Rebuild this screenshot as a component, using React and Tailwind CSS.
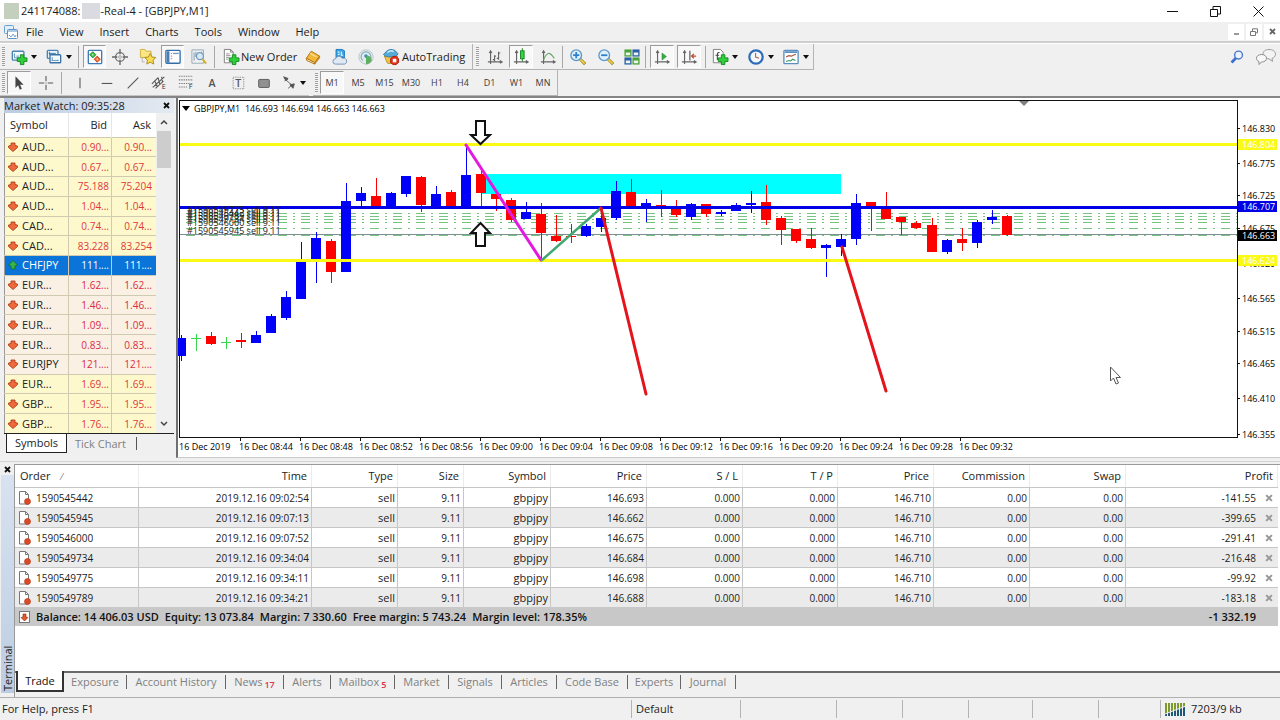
import React from 'react';

const menus = ['File', 'View', 'Insert', 'Charts', 'Tools', 'Window', 'Help'];

const symbols = [
  ['AUD...', '0.90...', '0.90...', 'yellow'],
  ['AUD...', '0.67...', '0.67...', 'yellow'],
  ['AUD...', '75.188', '75.204', 'yellow'],
  ['AUD...', '1.04...', '1.04...', 'yellow'],
  ['CAD...', '0.74...', '0.74...', 'yellow'],
  ['CAD...', '83.228', '83.254', 'yellow'],
  ['CHFJPY', '111....', '111....', 'selected'],
  ['EUR...', '1.62...', '1.62...', 'pink'],
  ['EUR...', '1.46...', '1.46...', 'pink'],
  ['EUR...', '1.09...', '1.09...', 'pink'],
  ['EUR...', '0.83...', '0.83...', 'pink'],
  ['EURJPY', '121....', '121....', 'pink'],
  ['EUR...', '1.69...', '1.69...', 'yellow'],
  ['GBP...', '1.95...', '1.95...', 'yellow'],
  ['GBP...', '1.76...', '1.76...', 'yellow'],
];

const rowTone = {
  yellow: 'bg-[#fdf9cd] text-[#e0383a]',
  pink: 'bg-[#fbf0e4] text-[#d92b45]',
  selected: 'bg-[#0a74d8] text-white',
};

const orders = [
  ['1590545442', '2019.12.16 09:02:54', '146.693', '-141.55'],
  ['1590545945', '2019.12.16 09:07:13', '146.662', '-399.65'],
  ['1590546000', '2019.12.16 09:07:52', '146.675', '-291.41'],
  ['1590549734', '2019.12.16 09:34:04', '146.684', '-216.48'],
  ['1590549775', '2019.12.16 09:34:11', '146.698', '-99.92'],
  ['1590549789', '2019.12.16 09:34:21', '146.688', '-183.18'],
];

const orderColumns = ['Time', 'Type', 'Size', 'Symbol', 'Price', 'S / L', 'T / P', 'Price', 'Commission', 'Swap', 'Profit'];

const terminalTabs = [
  { name: 'Exposure', width: 'w-[63px]' },
  { name: 'Account History', width: 'w-[99px]' },
  { name: 'News', width: 'w-[58px]', count: 17 },
  { name: 'Alerts', width: 'w-[47px]' },
  { name: 'Mailbox', width: 'w-[64px]', count: 5 },
  { name: 'Market', width: 'w-[54px]' },
  { name: 'Signals', width: 'w-[53px]' },
  { name: 'Articles', width: 'w-[55px]' },
  { name: 'Code Base', width: 'w-[71px]' },
  { name: 'Experts', width: 'w-[53px]' },
  { name: 'Journal', width: 'w-[55px]' },
];

const timeframes = [
  ['M5', 'w-[26px]'], ['M15', 'w-[27px]'], ['M30', 'w-[26px]'], ['H1', 'w-[26px]'],
  ['H4', 'w-[26px]'], ['D1', 'w-[27px]'], ['W1', 'w-[27px]'], ['MN', 'w-[26px]'],
];

// [high, body top, body bottom, low, colour]
const candles = [
  [335, 338, 356, 361, 'b'], [334, 338, 339, 351, 'g'], [332, 336, 344, 345, 'r'], [337, 342, 343, 349, 'g'],
  [333, 340, 342, 348, 'r'], [331, 335, 343, 343, 'b'], [314, 316, 333, 333, 'b'], [291, 297, 318, 320, 'b'],
  [242, 262, 299, 299, 'b'], [232, 238, 260, 283, 'b'], [239, 241, 272, 283, 'r'], [183, 201, 272, 272, 'b'],
  [187, 193, 201, 206, 'b'], [178, 196, 206, 208, 'r'], [192, 193, 206, 206, 'b'], [176, 176, 194, 197, 'b'],
  [176, 177, 205, 212, 'r'], [186, 194, 206, 206, 'b'], [190, 192, 206, 206, 'r'], [146, 175, 206, 206, 'b'],
  [171, 174, 193, 206, 'r'], [193, 194, 199, 211, 'r'], [198, 200, 220, 222, 'r'], [202, 212, 219, 219, 'b'],
  [203, 214, 233, 262, 'r'], [215, 236, 241, 242, 'r'], [224, 236, 237, 243, 'r'], [224, 226, 236, 237, 'b'],
  [207, 218, 227, 232, 'b'], [181, 191, 218, 220, 'b'], [179, 192, 206, 206, 'r'], [199, 203, 207, 222, 'b'],
  [190, 205, 209, 217, 'r'], [200, 208, 215, 217, 'r'], [203, 204, 217, 220, 'b'], [204, 204, 214, 217, 'r'],
  [210, 212, 214, 216, 'b'], [203, 205, 211, 211, 'b'], [191, 203, 205, 213, 'b'], [185, 202, 220, 225, 'r'],
  [216, 218, 230, 245, 'r'], [229, 229, 241, 243, 'r'], [228, 239, 248, 249, 'r'], [244, 245, 248, 277, 'b'],
  [234, 239, 247, 256, 'b'], [194, 203, 239, 245, 'b'], [202, 202, 209, 231, 'r'], [192, 208, 219, 219, 'r'],
  [217, 217, 222, 235, 'r'], [221, 223, 228, 229, 'r'], [218, 225, 252, 252, 'r'], [239, 240, 252, 254, 'b'],
  [228, 239, 243, 251, 'r'], [220, 222, 243, 248, 'b'], [210, 217, 220, 224, 'b'], [215, 216, 235, 236, 'r'],
];

const candleColor = { b: '#0000fa', r: '#fd0000', g: '#33d94a' };

const timeLabels = ['2019', '08:44', '08:48', '08:52', '08:56', '09:00', '09:04', '09:08', '09:12', '09:16', '09:20', '09:24', '09:28', '09:32'];

const priceLabels = [
  ['146.830', 128], ['146.775', 163], ['146.725', 195], ['146.675', 228], ['146.620', 263], ['146.565', 298],
  ['146.515', 331], ['146.465', 363], ['146.410', 398], ['146.355', 434],
];

const sellLabels = [
  ['#1590549775 sell 9.11', 213], ['#1590545442 sell 9.11', 216], ['#1590549789 sell 9.11', 219],
  ['#1590549734 sell 9.11', 222], ['#1590546000 sell 9.11', 226], ['#1590545945 sell 9.11', 234],
];

/* ---------- icons ---------- */

const Icon = ({ children, size = 16 }) => (
  <svg width={size} height={size} viewBox="0 0 18 18" fill="none" aria-hidden="true" className="shrink-0 overflow-visible">{children}</svg>
);

const Plus = () => (
  <path d="M10.500 6.500h4v3.500h3.500v4h-3.500v3.500h-4v-3.500h-3.500v-4h3.500z" fill="#2fd03a" stroke="#10851b" />
);

const Caret = () => (
  <svg width="6" height="4" viewBox="0 0 6 4" aria-hidden="true" className="shrink-0"><path d="M0 0h6L3 4z" fill="#111" /></svg>
);

const NewChartIcon = () => (
  <Icon>
    <rect x="1.500" y="2.500" width="13" height="10" rx="1" fill="#f4f9fd" stroke="#4a83b5" strokeWidth="1.500" />
    <path d="M4 5v5h8M4 6l-1 1M6 8h3" stroke="#5f8fb8" />
    <Plus />
  </Icon>
);

const ProfilesIcon = () => (
  <Icon>
    <rect x="1.500" y="1.500" width="12" height="9" rx="1" fill="#e8f2fb" stroke="#4a83b5" strokeWidth="1.500" />
    <path d="M3 5h8M4 3v4" stroke="#3d74a6" />
    <rect x="4.500" y="6.500" width="12" height="9" rx="1" fill="#f4f9fd" stroke="#3d74a6" strokeWidth="1.500" />
    <path d="M7 9v4h7M7 12l-1 1M13 12l1 1" stroke="#5f8fb8" />
  </Icon>
);

const MarketWatchIcon = () => (
  <Icon>
    <rect x="1.500" y="1.500" width="15" height="15" rx="1" fill="#fff" stroke="#3f7cb8" strokeWidth="1.500" />
    <path d="M6.500 3L10 6.500 6.500 10 3 6.500z" fill="#3dc046" stroke="#1b8a28" />
    <path d="M11.500 8L15 11.500 11.500 15 8 11.500z" fill="#f06a35" stroke="#c0401a" />
    <path d="M6.500 5.500v2M11.500 10.500v2" stroke="#fff" />
  </Icon>
);

const DataWindowIcon = () => (
  <Icon>
    <circle cx="9" cy="9" r="5" stroke="#777" strokeWidth="1.500" />
    <circle cx="9" cy="9" r="1.500" stroke="#999" />
    <path d="M9 0v6M9 12v6M0 9h6M12 9h6" stroke="#666" strokeWidth="1.500" />
  </Icon>
);

const NavigatorIcon = () => (
  <Icon>
    <path d="M.5 2.500V.5h5L7 2.500h5.500v7H.5z" fill="#fbe684" stroke="#d0ad3a" />
    <path d="M2.500 10v4.500H6" stroke="#777" strokeDasharray="1 1" />
    <path d="M11.500 5l2 4 4.300.6-3.100 3 .8 4.400-4-2.100-3.900 2.100.8-4.400-3.200-3 4.300-.6z" fill="#f8dc4b" stroke="#a9841a" />
  </Icon>
);

const TerminalIcon = () => (
  <Icon>
    <rect x="1" y="1.500" width="16" height="14.500" rx="1" fill="#fff" stroke="#356fa8" strokeWidth="1.500" />
    <path d="M2 2.500h3v13H2z" fill="#447fb8" />
    <path d="M9 5h6.500" stroke="#6d9cc6" strokeWidth="1.500" />
    <path d="M6.500 5h1.500M6.500 8h1.500M6.500 11h1.500" stroke="#c55" />
  </Icon>
);

const TesterIcon = () => (
  <Icon>
    <path d="M1 1h13v15H1z" fill="#eef2f5" stroke="#93a4b2" />
    <path d="M3.500 4v9M5.500 3v6M7.500 4v7M12 3v5" stroke="#7d93a6" />
    <circle cx="10" cy="8" r="4" fill="#d7e8f5" fillOpacity=".8" stroke="#6e9cc2" strokeWidth="1.300" />
    <path d="M13 11.500l4 5" stroke="#d6b023" strokeWidth="2.200" />
  </Icon>
);

const NewOrderIcon = () => (
  <Icon>
    <path d="M1.500.5h7l3 3v12h-10z" fill="#fff" stroke="#777" />
    <path d="M8.500.5v3h3" stroke="#777" />
    <path d="M3.500 5.500h4M3.500 7.500h5M3.500 9.500h3M3.500 11.500h2" stroke="#888" />
    <Plus />
  </Icon>
);

const MetaEditorIcon = () => (
  <Icon>
    <path d="M1.500 10.500L7 2.500l9.500 5.500-5.500 7.500z" fill="#f3b73b" stroke="#a9700f" />
    <path d="M1.500 10.500l.5 2.500 9 4 .2-1.500z" fill="#fbf1cf" stroke="#a9700f" />
    <path d="M11 15.500v1.500l5.500-7V8z" fill="#d78f1d" stroke="#a9700f" strokeWidth=".6" />
    <path d="M6 5l7 4" stroke="#fbe08c" strokeWidth="1.500" />
  </Icon>
);

const OptionsIcon = () => (
  <Icon>
    <path d="M4.500.5h7l2.500 1.500v8h-9.500z" fill="#3aa5e5" stroke="#1b74b4" />
    <path d="M6.500 3.500h2M6.500 6h2M10.500 3v4h2" stroke="#e4f5ff" strokeWidth="1.300" />
    <path d="M4 17a3 3 0 0 1 0-6 4 4 0 0 1 7.500-.5A3.300 3.300 0 0 1 14.500 17z" fill="#dfe9f4" stroke="#6e8db0" />
  </Icon>
);

const SignalIcon = () => (
  <Icon>
    <circle cx="9" cy="9" r="8" fill="#e4ebee" stroke="#b4c2c8" />
    <path d="M5.500 13a5.500 5.500 0 1 1 7 0" stroke="#7fb0c0" strokeWidth="1.300" />
    <circle cx="9" cy="8" r="2" fill="#3f8fb0" />
    <path d="M9 9v8.500a8 8 0 0 0 6.500-4.500c0-3-2-5-4-5.500z" fill="#5cb060" />
  </Icon>
);

const AutoTradingIcon = () => (
  <Icon>
    <path d="M1.500 8l3.500 8 9 .5L16.500 8z" fill="#efc548" stroke="#b98a1c" />
    <path d="M.5 6C2.500 5 4 .5 9 .5S15.500 4 17 5.500c-2 4-14 5-16.500.5z" fill="#57a9d8" stroke="#2d7bab" />
    <path d="M5 4c2-2 5-2.500 7-1" stroke="#cfeafa" strokeWidth="1.500" />
    <path d="M11 8.500h4l2.500 2.500v4L15 17.500h-4L8.500 15v-4z" fill="#e0301e" stroke="#a81f10" />
    <rect x="11" y="11" width="4" height="4" fill="#fff" />
  </Icon>
);

const axes = <path d="M4 2v15M1 14.500h16M2.500 4.500L4 2l1.500 2.500M14.500 13l2.500 1.500-2.500 1.500" stroke="#666" strokeWidth="1.300" />;

const BarChartIcon = () => <Icon>{axes}<path d="M8.500 7v7M8.500 12H6.500M8.500 8H10M13 3v9M13 4.500h2M13 10.500h-2" stroke="#666" strokeWidth="1.300" /></Icon>;
const CandleIcon = () => <Icon>{axes}<path d="M10.500-1v15" stroke="#12801c" /><rect x="8.500" y="2" width="4" height="9" fill="#35d444" stroke="#12801c" /></Icon>;
const LineChartIcon = () => <Icon>{axes}<path d="M4 12C8 3 11 3 16 10.500" stroke="#6aa56a" strokeWidth="1.400" /></Icon>;
const AutoScrollIcon = () => <Icon>{axes}<path d="M9 4.500l5 4-5 4z" fill="#36ad48" stroke="#1f8430" strokeWidth=".6" /></Icon>;
const ShiftIcon = () => <Icon>{axes}<path d="M10 2v11" stroke="#555" strokeWidth="1.300" /><path d="M17 8h-5M14.500 5.500L12 8l2.500 2.500" stroke="#c24a2b" strokeWidth="1.500" /></Icon>;

const ZoomIcon = ({ plus }) => (
  <Icon>
    <path d="M11 11l6 6" stroke="#9b7d18" strokeWidth="3.400" />
    <path d="M11 11l5.500 5.500" stroke="#f0cf45" strokeWidth="2" />
    <circle cx="7" cy="7" r="6" fill="#dff0fb" stroke="#5d98ca" strokeWidth="1.500" />
    <path d={plus ? 'M3.500 7h7M7 3.500v7' : 'M3.500 7h7'} stroke="#2c7fc8" strokeWidth="2" />
  </Icon>
);

const TileIcon = () => (
  <Icon>
    <rect x=".5" y=".5" width="8" height="8" fill="#4aa33a" /><rect x="9.500" y=".5" width="8" height="8" fill="#2d5fa8" />
    <rect x=".5" y="9.500" width="8" height="8" fill="#2d5fa8" /><rect x="9.500" y="9.500" width="8" height="8" fill="#4aa33a" />
    <path d="M2 4h5v3H2zM11 4h5v3h-5zM2 13h5v3H2zM11 13h5v3h-5z" fill="#eaf6e8" />
  </Icon>
);

const IndicatorsIcon = () => (
  <Icon>
    <path d="M1.500.5h8l3 3v12h-11z" fill="#fff" stroke="#777" />
    <path d="M8.500 4C6 3.500 6 5.500 6 7.500v5M4 7h4" stroke="#444" strokeWidth="1.200" />
    <Plus />
  </Icon>
);

const ClockIcon = () => (
  <Icon>
    <circle cx="9" cy="9" r="7.500" fill="#f2f7fb" stroke="#2c6cb8" strokeWidth="2.500" />
    <path d="M8.500 4.500V9l4 1.500" stroke="#b06a50" strokeWidth="1.300" />
  </Icon>
);

const TemplatesIcon = () => (
  <Icon>
    <rect x="1" y="1.500" width="16" height="15" rx="1" fill="#fff" stroke="#5b8fc0" strokeWidth="1.500" />
    <path d="M2 3.500h14" stroke="#5b8fc0" strokeWidth="2" />
    <path d="M3.500 9l3-1.500 3 .5 2-1 3-1" stroke="#a8543c" strokeWidth="1.200" />
    <path d="M3.500 14l3-1 2 .5 2.500-2 3 1.500" stroke="#3b9a5c" strokeWidth="1.200" />
  </Icon>
);

const ArrowMark = ({ up }) => (
  <svg width="10" height="10" viewBox="0 0 10 10" aria-hidden="true" className="shrink-0">
    {up
      ? <path d="M5 .5L9.500 5 7 6v3H3V6L.5 5z" fill="#37b34a" stroke="#0f6d25" strokeWidth=".8" />
      : <path d="M5 9.500L.5 5.500V4L3 3.500V1h4v2.500l2.500.5v1.500z" fill="#ee6a3c" stroke="#a8330f" strokeWidth=".8" />}
  </svg>
);

const OrderIcon = () => (
  <svg width="14" height="14" viewBox="0 0 14 14" fill="none" aria-hidden="true" className="shrink-0">
    <path d="M1.500.5h6l3 3v9.500h-9z" fill="#fff" stroke="#777" />
    <path d="M7.500.5v3h3" stroke="#777" />
    <circle cx="9.500" cy="10.500" r="3" fill="#dd4a26" stroke="#a93010" strokeWidth=".6" />
  </svg>
);

const CrossIcon = ({ color = '#111', size = 7 }) => (
  <svg width={size} height={size} viewBox="0 0 7 7" aria-hidden="true"><path d="M1 1l5 5M6 1L1 6" stroke={color} strokeWidth="1.800" /></svg>
);

/* ---------- toolbars ---------- */

const Handle = () => (
  <span className="mx-[2px] h-5 w-[3px] shrink-0 bg-[repeating-linear-gradient(#a0a0a0_0_1px,#f4f4f4_1px_2px)]" />
);

const Divider = () => <span className="h-[22px] w-px shrink-0 bg-[#a8a8a8]" />;

const Tool = ({ label, width = 'w-[26px]', pressed, children }) => (
  <button
    type="button"
    aria-label={label}
    className={`${width} flex h-[23px] shrink-0 items-center justify-center ${pressed ? 'border border-t-[#9c9c9c] border-r-white border-b-white border-l-[#9c9c9c] bg-[#f8f8f8]' : ''}`}
  >
    {children}
  </button>
);

const MainToolbar = () => (
  <div className="flex h-[27px] items-center border-t border-white">
    <div className="flex h-[26px] items-center border-r border-b border-[#b4b4b4]">
      <Handle />
      <Tool label="New chart" width="w-[33px]"><span className="flex items-center gap-1"><NewChartIcon /><Caret /></span></Tool>
      <Tool label="Profiles" width="w-[38px]"><span className="flex items-center gap-1"><ProfilesIcon /><Caret /></span></Tool>
      <Divider />
      <span className="w-1" />
      <Tool label="Market Watch" width="w-[23px]" pressed><MarketWatchIcon /></Tool>
      <Tool label="Data Window" width="w-[28px]"><DataWindowIcon /></Tool>
      <Tool label="Navigator" width="w-[27px]"><NavigatorIcon /></Tool>
      <Tool label="Terminal" width="w-[23px]" pressed><TerminalIcon /></Tool>
      <Tool label="Strategy Tester" width="w-[30px]"><TesterIcon /></Tool>
      <Divider />
      <button type="button" className="ml-2 flex w-[76px] items-center gap-[2px] whitespace-nowrap"><NewOrderIcon />New Order</button>
      <Tool label="MetaEditor" width="w-[28px]"><MetaEditorIcon /></Tool>
      <Tool label="Options"><OptionsIcon /></Tool>
      <Tool label="Signals"><SignalIcon /></Tool>
      <button type="button" className="ml-1 flex w-[89px] items-center gap-[3px] whitespace-nowrap"><AutoTradingIcon />AutoTrading</button>
    </div>
    <div className="flex h-[26px] items-center border-r border-b border-[#b4b4b4]">
      <span className="w-px" />
      <Handle />
      <Tool label="Bar chart" width="w-[28px]"><BarChartIcon /></Tool>
      <Tool label="Candlesticks" width="w-[24px]" pressed><CandleIcon /></Tool>
      <Tool label="Line chart" width="w-[29px]"><LineChartIcon /></Tool>
      <Divider />
      <Tool label="Zoom in" width="w-[30px]"><ZoomIcon plus /></Tool>
      <Tool label="Zoom out"><ZoomIcon /></Tool>
      <Tool label="Tile windows"><TileIcon /></Tool>
      <Divider />
      <span className="w-1" />
      <Tool label="Auto scroll" width="w-[24px]" pressed><AutoScrollIcon /></Tool>
      <span className="w-[3px]" />
      <Tool label="Chart shift" width="w-[24px]" pressed><ShiftIcon /></Tool>
      <span className="w-1" />
      <Divider />
      <Tool label="Indicators" width="w-[38px]"><span className="flex items-center gap-1"><IndicatorsIcon /><Caret /></span></Tool>
      <Tool label="Periods" width="w-[34px]"><span className="flex items-center gap-1"><ClockIcon /><Caret /></span></Tool>
      <Tool label="Templates" width="w-[35px]"><span className="flex items-center gap-1"><TemplatesIcon /><Caret /></span></Tool>
    </div>
    <div className="ml-auto flex items-center gap-3 pr-1">
      <button type="button" aria-label="Search">
        <Icon size={14}>
          <path d="M8 10l-6 6" stroke="#3d6fd0" strokeWidth="3.500" />
          <circle cx="11" cy="6.500" r="5" fill="#eef4fd" stroke="#4a76cc" strokeWidth="1.800" />
        </Icon>
      </button>
      <button type="button" aria-label="Chat">
        <svg width="20" height="18" viewBox="0 0 20 18" aria-hidden="true">
          <path d="M13 1.500c4 0 6.500 2 6.500 4.700 0 2-1.500 3.500-3.500 4.200l.5 3-3.500-2.600c-4 0-6-2-6-4.600s2-4.700 6-4.700z" fill="#f3f3f3" stroke="#9a9a9a" />
          <path d="M5.500 6.500c3 0 5 1.600 5 3.800S8.500 14 5.500 14L3 16.500 3 13.500C1.500 13 .5 12 .5 10.300c0-2.200 2-3.800 5-3.800z" fill="#f8f8f8" stroke="#8c8c8c" />
        </svg>
      </button>
    </div>
  </div>
);

const LineToolbar = () => (
  <div className="flex h-[26px] items-center text-[9px] text-[#3c3c3c]">
    <div className="flex h-[26px] items-center border-b border-[#c4c4c4]">
      <Handle />
      <Tool label="Cursor" width="w-[24px]" pressed>
        <Icon><path d="M5 1.500v13l3-3 2 5 2.200-1-2-4.500h4z" fill="#444" /></Icon>
      </Tool>
      <Tool label="Crosshair" width="w-[30px]"><Icon><path d="M9 1v6M9 11v6M1 9h6M11 9h6M8.500 9h1" stroke="#555" strokeWidth="1.200" /></Icon></Tool>
      <Divider />
      <span className="w-[5px]" />
      <Tool label="Vertical line"><Icon><path d="M9 3v12" stroke="#555" strokeWidth="1.200" /></Icon></Tool>
      <Tool label="Horizontal line" width="w-[27px]"><Icon><path d="M3 9.500h12" stroke="#555" strokeWidth="1.200" /></Icon></Tool>
      <Tool label="Trendline"><Icon><path d="M3 15L15 3" stroke="#555" strokeWidth="1.200" /></Icon></Tool>
      <Tool label="Equidistant channel">
        <Icon><path d="M2 14L15 2M1 10l7-7M4 6l3 7M8 3l2 8M12 2l1 6M5 15l9-8" stroke="#555" strokeWidth="1.200" /><text x="12" y="16" fontSize="8" fill="#333">E</text></Icon>
      </Tool>
      <Tool label="Fibonacci retracement" width="w-[27px]">
        <Icon><path d="M1 1.500h16M1 5.500h16M1 9.500h16M1 13.500h9" stroke="#666" strokeWidth="1.200" strokeDasharray="1 1" /><text x="12" y="16" fontSize="8" fill="#333">F</text></Icon>
      </Tool>
      <Tool label="Text"><Icon><text x="5" y="13" fontSize="12" fontWeight="600" fill="#555">A</text></Icon></Tool>
      <Tool label="Text label">
        <Icon><rect x="3.500" y="2.500" width="12" height="13" stroke="#777" strokeDasharray="1 1" /><text x="6" y="13" fontSize="12" fontWeight="600" fill="#555">T</text></Icon>
      </Tool>
      <Tool label="Rectangle"><Icon><rect x="3" y="5" width="12" height="9" rx="1" fill="#909090" stroke="#555" /></Icon></Tool>
      <Tool label="Arrows" width="w-[32px]">
        <span className="flex items-center gap-[3px]">
          <Icon><path d="M3 2l2.500 4.500L8 4zM4 6.500L8 4M6 6l6 5M10 11l5-1-1.500 5zM8 15l6-5" fill="#555" stroke="#555" /></Icon>
          <Caret />
        </span>
      </Tool>
    </div>
    <span className="w-1" />
    <div className="flex h-[26px] items-center border-r border-b border-[#b4b4b4] pr-px">
      <Handle />
      <Tool label="M1" width="w-[24px]" pressed>M1</Tool>
      <span className="w-px" />
      {timeframes.map(([t, width]) => <Tool key={t} label={t} width={width}>{t}</Tool>)}
    </div>
  </div>
);

/* ---------- market watch ---------- */

const MarketWatch = () => (
  <aside className="flex w-[176px] shrink-0 flex-col pr-[2px] pl-1">
    <div className="flex h-[15px] items-center justify-between bg-gradient-to-r from-[#bccde2] to-[#e4eaf1] pr-1 text-[#222]">
      <h2>Market Watch: 09:35:28</h2>
      <button type="button" aria-label="Close Market Watch"><CrossIcon /></button>
    </div>
    <div className="flex h-[320px]">
      <table className="h-[320px] w-[152px] table-fixed border-collapse border-l border-[#9a9a9a] bg-white">
        <colgroup><col className="w-[64px]" /><col className="w-[43px]" /><col /></colgroup>
        <thead>
          <tr className="h-[24px]">
            <th className="pl-[5px] text-left font-normal">Symbol</th>
            <th className="border-l border-[#e6e6e6] pr-1 text-right font-normal">Bid</th>
            <th className="border-l border-[#e6e6e6] pr-[5px] text-right font-normal">Ask</th>
          </tr>
        </thead>
        <tbody>
          {symbols.map(([name, bid, ask, tone], i) => (
            <tr key={i} className={rowTone[tone]}>
              <td className={`border-t border-[#cfcab0] p-0 pl-[3px] ${tone === 'selected' ? 'text-white' : 'text-[#222]'}`}>
                <span className="flex items-center gap-1"><ArrowMark up={tone === 'selected'} />{name}</span>
              </td>
              <td className="border-t border-l border-[#cfcab0] p-0 pr-[2px] text-right text-[10px]">{bid}</td>
              <td className="border-t border-l border-[#cfcab0] p-0 pr-1 text-right text-[10px]">{ask}</td>
            </tr>
          ))}
        </tbody>
      </table>
      <div className="ml-px flex w-[14px] flex-col items-center bg-[#f0f0f0] py-[6px]">
        <svg width="8" height="6" viewBox="0 0 8 6" fill="none" aria-hidden="true"><path d="M1 5l3-3 3 3" stroke="#444" strokeWidth="1.500" /></svg>
        <span className="mt-[6px] h-[37px] w-full bg-[#cdcdcd]" />
        <svg width="8" height="6" viewBox="0 0 8 6" fill="none" aria-hidden="true" className="mt-auto"><path d="M1 1l3 3 3-3" stroke="#444" strokeWidth="1.500" /></svg>
      </div>
    </div>
    <div className="flex h-5 border-t border-[#222]">
      <button type="button" className="ml-[2px] w-[61px] border-r border-b border-l border-[#222] bg-white">Symbols</button>
      <button type="button" className="my-[3px] w-[70px] border-r border-[#555] pr-[2px] text-[#808080]">Tick Chart</button>
    </div>
  </aside>
);

/* ---------- chart ---------- */

const Candle = ({ x, data: [high, top, bottom, low, tone] }) => (
  <g fill={candleColor[tone]}>
    <rect x={x} y={high} width="1" height={low - high} />
    <rect x={x - 5} y={top} width="10" height={bottom - top} />
  </g>
);

const PriceTag = ({ y, fill, color, children }) => (
  <g>
    <rect x="1" y={y - 5} width="39" height="11" fill={fill} />
    <text x="5" y={y + 4} fill={color}>{children}</text>
  </g>
);

const Chart = () => (
  <main className="flex min-w-0 flex-1 border-b border-l-2 border-b-[#c8c8c8] border-l-[#707070] bg-white text-[9px]">
    <svg className="h-full min-w-0 flex-1" role="img" aria-label="GBPJPY one minute chart">
      <g transform="translate(-178 -98)">
        <g shapeRendering="crispEdges">
          <path d="M179.500 437V100.500H3000M179 437.500H3000" stroke="#111" fill="none" />
          <rect x="481" y="174" width="360" height="20" fill="#00ffff" />
          {[213, 216, 219, 222, 228, 235].map((y) => (
            <path key={y} d={`M186 ${y}.500H3000`} stroke="#74c47e" strokeDasharray="9 6 2 6" />
          ))}
          <path d="M180 234.500H3000" stroke="#7d8f92" />
          {candles.map((c, i) => <Candle key={i} x={Math.round(180.5 + i * 15.02)} data={c} />)}
          <rect x="180" y="143" width="3000" height="3" fill="#fafa14" />
          <rect x="180" y="206" width="3000" height="3" fill="#0000e6" />
          <rect x="180" y="259" width="3000" height="3" fill="#fafa14" />
          {timeLabels.slice(1).map((t, i) => <rect key={t} x={240 + i * 60} y="437" width="1" height="4" fill="#111" />)}
        </g>
        <g fill="#222">
          {sellLabels.map(([t, y]) => <text key={t} x="187" y={y}>{t}</text>)}
        </g>
        <g fill="none" strokeWidth="3" strokeLinecap="round">
          <path d="M466 145l75 115" stroke="#e31be0" />
          <path d="M542 260l59-52" stroke="#3fa873" strokeWidth="2.500" />
          <path d="M601 208l45 186M842 247l44 144" stroke="#e5141c" />
        </g>
        <g fill="#fff" stroke="#111" strokeWidth="2">
          <path d="M476 121h9v14h5l-9.500 9-9.500-9h5z" />
          <path d="M476 246h9v-13h5l-9.500-10-9.500 10h5z" />
        </g>
        <path d="M1019 101h10l-5 5z" fill="#808080" />
        <path d="M182 106h8l-4 5z" fill="#000" />
        <text x="194" y="112" xmlSpace="preserve">GBPJPY,M1  146.693 146.694 146.663 146.663</text>
        {timeLabels.map((t, i) => <text key={t} x={179 + i * 60} y="450">16 Dec {t}</text>)}
        <path d="M1110.500 367v14l3-3 2.500 6 2.500-1-2.500-5.500h4.500z" fill="#fff" stroke="#555" />
      </g>
    </svg>
    <svg className="h-full w-[43px] shrink-0" role="img" aria-label="Price scale">
      <g transform="translate(0 -98)">
        <path d="M.5 100v338" stroke="#111" />
        {priceLabels.map(([p, y]) => (
          <g key={p}>
            <path d={`M1 ${y}.500h2`} stroke="#111" />
            <text x="5" y={y + 4}>{p}</text>
          </g>
        ))}
        <PriceTag y={144} fill="#fafa14" color="#fff">146.804</PriceTag>
        <PriceTag y={206} fill="#0000e6" color="#fff">146.707</PriceTag>
        <PriceTag y={235} fill="#000" color="#fff">146.663</PriceTag>
        <PriceTag y={260} fill="#fafa14" color="#fff">146.624</PriceTag>
      </g>
    </svg>
  </main>
);

/* ---------- terminal ---------- */

const cell = 'border-t border-r border-[#c6c6c6] p-0 pr-[2px] text-right';

const Terminal = () => (
  <section className="flex h-[236px] border-t border-[#d4d4d4] pt-[2px]">
    <div className="flex w-[14px] shrink-0 flex-col items-center">
      <button type="button" aria-label="Close Terminal" className="flex h-[11px] w-full items-center justify-center"><CrossIcon /></button>
      <div className="flex w-[13px] flex-1 rotate-180 items-center justify-start bg-gradient-to-b from-[#bccde2] to-[#d8e3f1] pt-[2px] leading-[13px] [writing-mode:vertical-rl]">Terminal</div>
      <span className="h-1" />
    </div>
    <div className="flex min-w-0 flex-1 flex-col border-t border-l border-[#9a9a9a]">
      <div className="h-[206px] bg-white pr-[2px]">
        <table className="h-[161px] w-full table-fixed border-separate border-spacing-0">
          <colgroup>
            <col className="w-[124px]" /><col className="w-[173px]" /><col className="w-[86px]" /><col className="w-[66px]" />
            <col className="w-[87px]" /><col className="w-[96px]" /><col className="w-[96px]" /><col className="w-[95px]" />
            <col className="w-[96px]" /><col className="w-[96px]" /><col className="w-[96px]" /><col />
          </colgroup>
          <thead>
            <tr className="h-[22px]">
              <th className="border-r border-[#ececec] p-0 pl-[5px] text-left font-normal">Order <span className="pl-2 text-[9px] text-[#666]">⁄</span></th>
              {orderColumns.map((c, i) => <th key={i} className="border-r border-[#ececec] p-0 pr-1 text-right font-normal">{c}</th>)}
            </tr>
          </thead>
          <tbody className="text-[10px]">
            {orders.map(([id, time, price, profit], i) => (
              <tr key={id} className={`h-[19px] ${i % 2 ? 'bg-[#ebebeb]' : 'bg-white'}`}>
                <td className="border-t border-r border-[#c6c6c6] p-0 pl-[3px]"><span className="flex items-center gap-1"><OrderIcon />{id}</span></td>
                <td className={cell}>{time}</td>
                <td className={`${cell} text-[11px]`}>sell</td>
                <td className={cell}>9.11</td>
                <td className={`${cell} text-[11px]`}>gbpjpy</td>
                <td className={cell}>{price}</td>
                <td className={cell}>0.000</td>
                <td className={cell}>0.000</td>
                <td className={cell}>146.710</td>
                <td className={cell}>0.00</td>
                <td className={cell}>0.00</td>
                <td className="border-t border-[#c6c6c6] p-0 pr-[5px]">
                  <span className="flex items-center justify-end gap-[9px]">{profit}<button type="button" aria-label={`Close ${id}`}><CrossIcon color="#999" size={8} /></button></span>
                </td>
              </tr>
            ))}
          </tbody>
          <tfoot>
            <tr className="h-[19px] bg-[#c8c8c8] font-semibold text-[#111]">
              <td colSpan={11} className="p-0 pl-1">
                <span className="flex items-center gap-[6px] whitespace-nowrap">
                  <svg width="11" height="12" viewBox="0 0 11 12" aria-hidden="true">
                    <rect x=".5" y=".5" width="10" height="11" fill="#fff" stroke="#777" />
                    <path d="M5.500 10L2 6.500l2-.5V3h3v3l2 .5z" fill="#e0582c" stroke="#8a2c0c" strokeWidth=".6" />
                  </svg>
                  <span>Balance: 14 406.03 USD</span><span>Equity: 13 073.84</span><span>Margin: 7 330.60</span>
                  <span>Free margin: 5 743.24</span><span>Margin level: 178.35%</span>
                </span>
              </td>
              <td className="p-0 pr-[22px] text-right">-1 332.19</td>
            </tr>
          </tfoot>
        </table>
      </div>
      <div className="flex h-[21px] items-start border-t-2 border-[#6a6a6a] text-[#808080]">
        <button type="button" className="-mt-[2px] ml-px h-[21px] w-[48px] border-r-2 border-b-2 border-l-2 border-[#333] bg-white text-[#111]">Trade</button>
        {terminalTabs.map(({ name, width, count }) => (
          <button key={name} type="button" className={`${width} mt-[2px] flex h-[14px] items-center justify-center border-r border-[#666] whitespace-nowrap`}>
            {name}
            {count && <span className="ml-[2px] self-end text-[9px] leading-[8px] font-semibold text-[#e0324a]">{count}</span>}
          </button>
        ))}
      </div>
    </div>
  </section>
);

const StatusBar = () => (
  <footer className="flex h-[23px] items-center border-t border-[#b0b0b0]">
    <span className="flex-1 pl-[2px]">For Help, press F1</span>
    <span className="h-[18px] w-[109px] border-l border-[#b4b4b4] pl-1 leading-[18px]">Default</span>
    <span className="h-[18px] w-[96px] border-l border-[#b4b4b4]" />
    <span className="h-[18px] w-[66px] border-l border-[#b4b4b4]" />
    <span className="h-[18px] w-[66px] border-l border-[#b4b4b4]" />
    <span className="h-[18px] w-[64px] border-l border-[#b4b4b4]" />
    <span className="h-[18px] w-[66px] border-l border-[#b4b4b4]" />
    <span className="h-[18px] w-[62px] border-l border-[#b4b4b4]" />
    <span className="flex h-[18px] w-[120px] items-center gap-1 border-l border-[#b4b4b4] pl-1">
      <svg width="22" height="13" viewBox="0 0 22 13" aria-hidden="true">
        {[0, 3, 6, 9, 12, 15, 18].map((x, i) => (
          <g key={x}>
            <rect x={x} y="0" width="2" height="13" fill="#7c9a2c" />
            <rect x={x} y={10 - i} width="2" height={3 + i} fill="#1f5876" />
          </g>
        ))}
        <path d="M0 11L21 3" stroke="#f0f0f0" />
      </svg>
      7203/9 kb
    </span>
  </footer>
);

const App = () => {
  return (
    <div className="flex min-h-screen flex-col overflow-hidden bg-[#f0f0f0] [font-family:'Open_Sans',sans-serif] text-[11px] leading-[14px] text-[#1c1c1c]">
      {/* title bar */}
      <header className="flex h-[22px] items-center bg-white">
        <span className="ml-1 h-[16px] w-[15px] bg-[#c5cfbd]" />
        <h1 className="ml-[2px] flex items-center">241174088:<span className="mx-px h-[16px] w-[18px] bg-[#dadbe0]" />-Real-4 - [GBPJPY,M1]</h1>
        <div className="ml-auto flex items-center gap-8 pr-4">
          <button type="button" aria-label="Minimize"><svg width="11" height="11" viewBox="0 0 11 11"><path d="M0 5.500h11" stroke="#111" /></svg></button>
          <button type="button" aria-label="Restore"><svg width="11" height="11" viewBox="0 0 11 11" fill="none"><path d="M.5 3.500h7v7h-7zM3 3V.5h7.500V8H8" stroke="#111" /></svg></button>
          <button type="button" aria-label="Close"><svg width="11" height="11" viewBox="0 0 11 11"><path d="M.5.5l10 10M10.500.5l-10 10" stroke="#111" /></svg></button>
        </div>
      </header>

      {/* menu bar */}
      <nav className="flex h-[21px] items-center border-b-2 border-[#cfcfcf]">
        <svg width="14" height="14" viewBox="0 0 14 14" fill="none" aria-hidden="true" className="mr-[3px] ml-1">
          <rect x=".5" y=".5" width="9" height="8" rx="1" fill="#e3f0fb" stroke="#6a9fd0" />
          <rect x="3.500" y="4.500" width="10" height="9" rx="1" fill="#fff" stroke="#5b93c8" />
          <path d="M3.500 6h10" stroke="#5b93c8" /><path d="M5 10l2 2 2-3 2 3 1-2" stroke="#7aa8d4" />
        </svg>
        {menus.map((m) => <button key={m} type="button" className="px-2 first-of-type:pl-[5px]">{m}</button>)}
        <div className="ml-auto flex gap-[2px]">
          <button type="button" aria-label="Minimize chart" className="flex h-4 w-4 items-center justify-center bg-white"><svg width="7" height="7" viewBox="0 0 7 7"><path d="M1 6h5" stroke="#777" strokeWidth="1.500" /></svg></button>
          <button type="button" aria-label="Restore chart" className="flex h-4 w-4 items-center justify-center bg-white"><svg width="8" height="8" viewBox="0 0 8 8" fill="none"><path d="M.5 3.500h5v4h-5zM2.500 3V.8h5v4H6" stroke="#777" /></svg></button>
          <button type="button" aria-label="Close chart" className="flex h-4 w-4 items-center justify-center bg-white"><CrossIcon color="#666" /></button>
        </div>
      </nav>

      <MainToolbar />
      <LineToolbar />

      <div className="flex min-h-[361px] flex-1 border-t-2 border-[#858585] pb-[3px]">
        <MarketWatch />
        <Chart />
      </div>

      <Terminal />
      <StatusBar />
    </div>
  );
};

export default App;
